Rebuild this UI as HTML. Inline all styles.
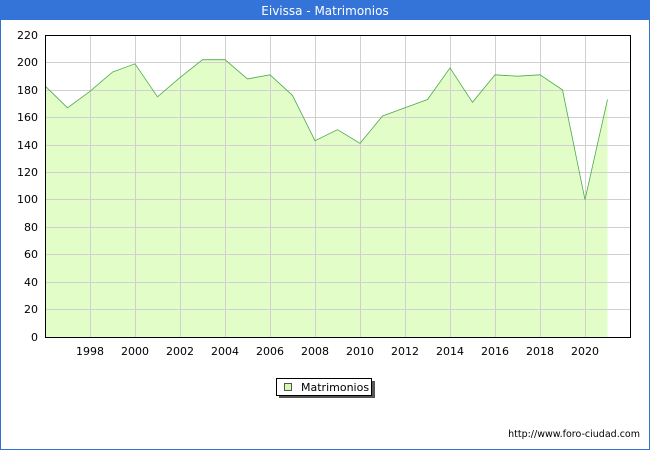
<!DOCTYPE html>
<html><head><meta charset="utf-8"><style>
body{margin:0;width:650px;height:450px;overflow:hidden;background:#fff;font-family:"DejaVu Sans","Liberation Sans",sans-serif}
</style></head><body>
<svg width="650" height="450" xmlns="http://www.w3.org/2000/svg" font-family="DejaVu Sans, Liberation Sans, sans-serif">
<rect x="0.5" y="0.5" width="649" height="449" fill="#fff" stroke="#3070d8"/>
<rect x="0" y="0" width="650" height="20" fill="#3473d8"/>
<text x="325" y="15" fill="#fff" font-size="12" text-anchor="middle">Eivissa - Matrimonios</text>
<polygon fill="#e2fdc8" points="45,337 45,85.8 67.5,107.8 90,91.3 112.5,72.1 135,63.8 157.5,96.8 180,77.6 202.5,59.7 225,59.7 247.5,78.9 270,74.8 292.5,95.4 315,140.7 337.5,129.7 360,143.4 382.5,116 405,107.8 427.5,99.5 450,67.9 472.5,102.3 495,74.8 517.5,76.2 540,74.8 562.5,89.9 585,199.7 607.5,99.5 607.5,337"/>
<g stroke="#d0d0d0" stroke-width="1">
<line x1="45" y1="309.5" x2="630" y2="309.5"/><line x1="45" y1="282.5" x2="630" y2="282.5"/><line x1="45" y1="254.5" x2="630" y2="254.5"/><line x1="45" y1="227.5" x2="630" y2="227.5"/><line x1="45" y1="199.5" x2="630" y2="199.5"/><line x1="45" y1="172.5" x2="630" y2="172.5"/><line x1="45" y1="145.5" x2="630" y2="145.5"/><line x1="45" y1="117.5" x2="630" y2="117.5"/><line x1="45" y1="90.5" x2="630" y2="90.5"/><line x1="45" y1="62.5" x2="630" y2="62.5"/>
<line x1="90.5" y1="35" x2="90.5" y2="337"/><line x1="135.5" y1="35" x2="135.5" y2="337"/><line x1="180.5" y1="35" x2="180.5" y2="337"/><line x1="225.5" y1="35" x2="225.5" y2="337"/><line x1="270.5" y1="35" x2="270.5" y2="337"/><line x1="315.5" y1="35" x2="315.5" y2="337"/><line x1="360.5" y1="35" x2="360.5" y2="337"/><line x1="405.5" y1="35" x2="405.5" y2="337"/><line x1="450.5" y1="35" x2="450.5" y2="337"/><line x1="495.5" y1="35" x2="495.5" y2="337"/><line x1="540.5" y1="35" x2="540.5" y2="337"/><line x1="585.5" y1="35" x2="585.5" y2="337"/>
</g>
<polyline fill="none" stroke="#4caa4c" stroke-width="0.8" points="45,85.8 67.5,107.8 90,91.3 112.5,72.1 135,63.8 157.5,96.8 180,77.6 202.5,59.7 225,59.7 247.5,78.9 270,74.8 292.5,95.4 315,140.7 337.5,129.7 360,143.4 382.5,116 405,107.8 427.5,99.5 450,67.9 472.5,102.3 495,74.8 517.5,76.2 540,74.8 562.5,89.9 585,199.7 607.5,99.5"/>
<rect x="45.5" y="35.5" width="585" height="302" fill="none" stroke="#000"/>
<g font-size="11" fill="#000" text-anchor="end">
<text x="38" y="341">0</text><text x="38" y="313">20</text><text x="38" y="286">40</text><text x="38" y="258">60</text><text x="38" y="231">80</text><text x="38" y="203">100</text><text x="38" y="176">120</text><text x="38" y="149">140</text><text x="38" y="121">160</text><text x="38" y="94">180</text><text x="38" y="66">200</text><text x="38" y="39">220</text>
</g>
<g font-size="11" fill="#000" text-anchor="middle">
<text x="90" y="355">1998</text><text x="135" y="355">2000</text><text x="180" y="355">2002</text><text x="225" y="355">2004</text><text x="270" y="355">2006</text><text x="315" y="355">2008</text><text x="360" y="355">2010</text><text x="405" y="355">2012</text><text x="450" y="355">2014</text><text x="495" y="355">2016</text><text x="540" y="355">2018</text><text x="585" y="355">2020</text>
</g>
<rect x="279" y="381" width="96" height="17" fill="#555"/>
<rect x="276.5" y="378.5" width="95" height="17" fill="#fff" stroke="#000"/>
<rect x="284.5" y="383.5" width="7" height="7" fill="#d8f8b0" stroke="#555"/>
<text x="301" y="391" font-size="11">Matrimonios</text>
<text x="640" y="437" font-size="9.5" text-anchor="end">http://www.foro-ciudad.com</text>
</svg>
</body></html>
